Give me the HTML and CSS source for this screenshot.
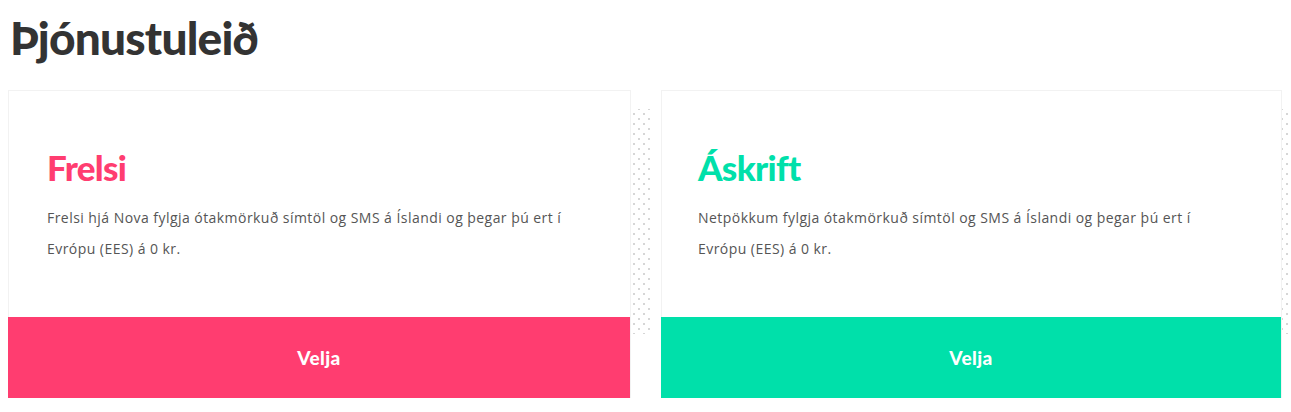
FILE: index.html
```html
<!DOCTYPE html>
<html lang="is">
<head>
<meta charset="utf-8">
<title>Þjónustuleið</title>
<link rel="stylesheet" href="styles.css">
</head>
<body>
<h1 class="page-title">Þjónustuleið</h1>
<div class="plans">
  <div class="plan">
    <div class="plan-dots"></div>
    <div class="plan-card">
      <div class="plan-body">
        <h2 class="plan-name plan-name--pink">Frelsi</h2>
        <p class="plan-text">Frelsi hjá Nova fylgja ótakmörkuð símtöl og SMS á Íslandi og þegar þú ert í Evrópu (EES) á 0 kr.</p>
      </div>
      <button class="plan-btn plan-btn--pink">Velja</button>
    </div>
  </div>
  <div class="plan">
    <div class="plan-dots"></div>
    <div class="plan-card">
      <div class="plan-body plan-body--right">
        <h2 class="plan-name plan-name--green">Áskrift</h2>
        <p class="plan-text plan-text--narrow">Netpökkum fylgja ótakmörkuð símtöl og SMS á Íslandi og þegar þú ert í Evrópu (EES) á 0 kr.</p>
      </div>
      <button class="plan-btn plan-btn--green">Velja</button>
    </div>
  </div>
</div>
</body>
</html>
```
FILE: styles.css
```css
* { box-sizing: border-box; }
html, body { margin: 0; padding: 0; background: #fff; }
body {
  padding: 0 9px 0 8px;
  font-family: "Lato", "Noto Sans", sans-serif;
  overflow: hidden;
}
.page-title {
  margin: 0;
  padding: 12px 0 0 2px;
  height: 90px;
  font-family: "Lato", sans-serif;
  font-weight: 900;
  font-size: 46px;
  line-height: 52px;
  letter-spacing: -0.8px;
  color: #333;
}
.plans {
  display: grid;
  grid-template-columns: 623px 621px;
  gap: 30px;
}
.plan { position: relative; }
.plan-dots {
  position: absolute;
  left: 40px;
  right: -22px;
  top: 19px;
  height: 225px;
  background-image:
    radial-gradient(circle, #d6d6d6 0.9px, transparent 1.2px),
    radial-gradient(circle, #d6d6d6 0.9px, transparent 1.2px);
  background-size: 10px 10px, 10px 10px;
  background-position: 1px 0, 6px 5px;
  z-index: 0;
}
.plan-card {
  position: relative;
  z-index: 1;
  background: #fff;
  border: 1px solid #f2f2f2;
  border-bottom: 0;
  height: 308px;
  display: flex;
  flex-direction: column;
}
.plan-body {
  flex: 1;
  padding: 56px 20px 0 38px;
}
.plan-body--right { padding-left: 36px; }
.plan-name {
  margin: 0;
  font-family: "Lato", sans-serif;
  font-weight: 900;
  font-size: 35px;
  line-height: 40px;
  letter-spacing: -0.7px;
}
.plan-name--pink { color: #ff3d70; }
.plan-name--green { color: #00e0aa; }
.plan-text {
  margin: 15px 0 0;
  font-family: "Open Sans", sans-serif;
  font-size: 14px;
  line-height: 31px;
  letter-spacing: 0.45px;
  color: #555;
  max-width: 560px;
}
.plan-text--narrow { max-width: 540px; }
.plan-btn {
  display: block;
  width: calc(100% + 1px);
  margin: 0 0 0 -1px;
  height: 81px;
  border: 0;
  color: #fff;
  font-family: "Lato", sans-serif;
  font-weight: 900;
  font-size: 19px;
  letter-spacing: 0.4px;
  cursor: pointer;
}
.plan-btn--pink { background: #ff3d70; }
.plan-btn--green { background: #00e0aa; }
```
